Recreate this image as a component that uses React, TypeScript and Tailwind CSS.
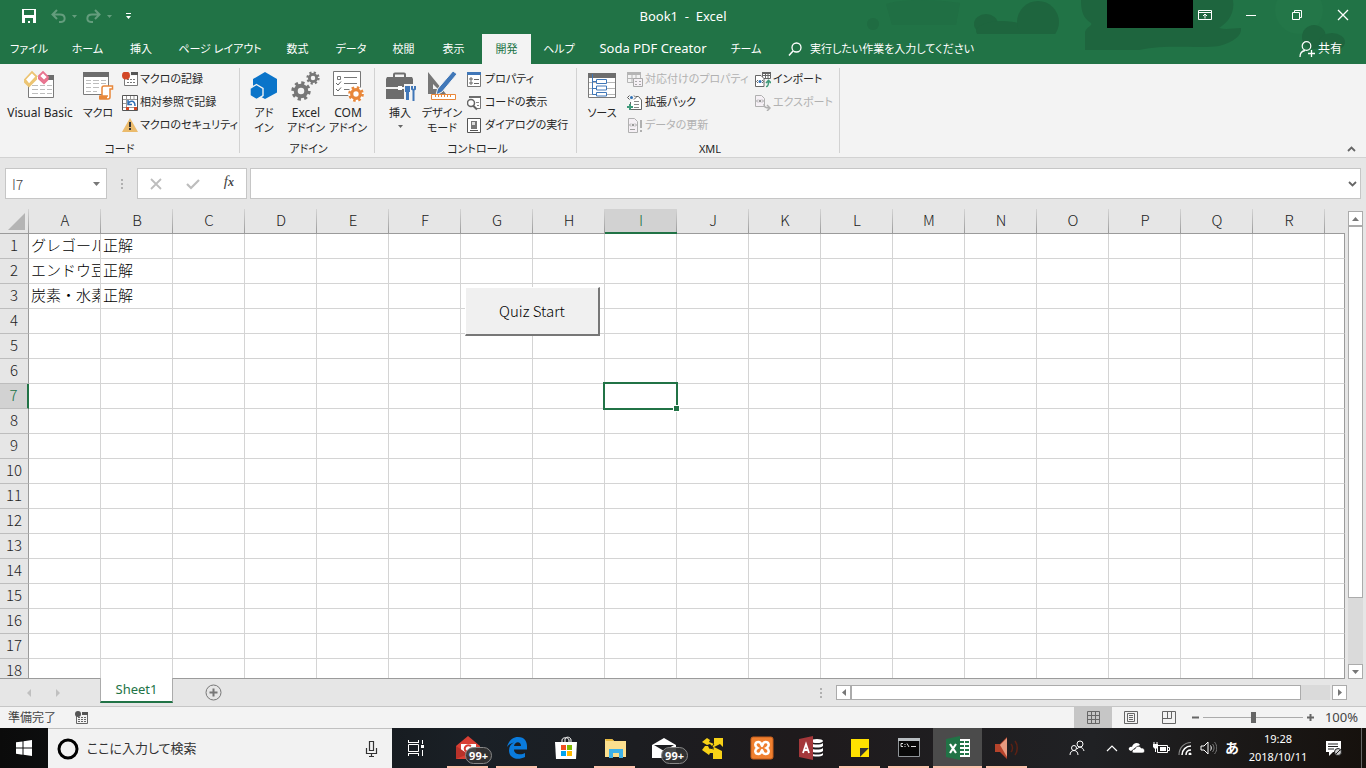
import type { ReactNode } from "react";
import clsx from "clsx";

const UI_FONT = "font-['Noto_Sans','Noto_Sans_CJK_JP',sans-serif] [font-feature-settings:'palt']";
const SHEET_FONT = "font-['Noto_Sans_CJK_JP',sans-serif] font-light [font-feature-settings:normal]";

const TABS = [
  { label: "ファイル", width: "w-[58px]" },
  { label: "ホーム", width: "w-[59px]" },
  { label: "挿入", width: "w-[48px]" },
  { label: "ページ レイアウト", width: "w-[110px]" },
  { label: "数式", width: "w-[45px]" },
  { label: "データ", width: "w-[62px]" },
  { label: "校閲", width: "w-[43px]" },
  { label: "表示", width: "w-[57px]" },
  { label: "開発", width: "w-[49px]", active: true },
  { label: "ヘルプ", width: "w-[56px]" },
  { label: "Soda PDF Creator", width: "w-[132px]", latin: true },
  { label: "チーム", width: "w-[54px]" },
];

const COLUMNS = "ABCDEFGHIJKLMNOPQR".split("");
const ROWS = Array.from({ length: 18 }, (_, i) => i + 1);
const CELLS: Record<string, string> = {
  A1: "グレゴール",
  B1: "正解",
  A2: "エンドウ豆",
  B2: "正解",
  A3: "炭素・水素",
  B3: "正解",
};

/* ---------- icons ---------- */

function Icon({ w = 16, h = 16, children, className }: { w?: number; h?: number; children: ReactNode; className?: string }) {
  return (
    <svg width={w} height={h} viewBox={`0 0 ${w} ${h}`} fill="none" className={clsx("shrink-0", className)} aria-hidden="true">
      {children}
    </svg>
  );
}

function Gear({ x, y, r, color }: { x: number; y: number; r: number; color: string }) {
  const tooth = (2 * Math.PI * r) / 16;
  return (
    <g stroke={color}>
      <circle cx={x} cy={y} r={r * 0.66} strokeWidth={r * 0.5} />
      <circle cx={x} cy={y} r={r} strokeWidth={r * 0.42} strokeDasharray={`${tooth} ${tooth}`} />
    </g>
  );
}

const VisualBasicIcon = () => (
  <Icon w={32} h={32}>
    <path d="M4.500 8v19.500h25V5" fill="#fff" stroke="#7a7a7a" />
    <path d="M23 5h7v5h-7z" fill="#6d6d6d" />
    <path d="M8 15.500h6m2 0h5m2 0h5M8 19.500h6m2 0h5m2 0h5M8 23.500h6m2 0h5m2 0h5" stroke="#bdbdbd" />
    <path d="M1 9.500 8 2l4.500 4.500L5 14.500z" fill="#fff" stroke="#ecc472" strokeWidth="1.800" />
    <path d="M0 9.500 5 14.500v3L0 12.500zM5 14.500l8-8v3l-8 8z" fill="#ecc472" />
    <path d="m15 6 4-4 5 5-4 4z" fill="#fff" stroke="#e8738f" strokeWidth="1.800" />
    <path d="m14 6 6 5.500v3L14 9zM20 11.500l4.500-4.500v3L20 14.500z" fill="#e8738f" />
  </Icon>
);

const MacroIcon = () => (
  <Icon w={32} h={32}>
    <path d="M1.500 4v20.500h25V4" fill="#fff" stroke="#7a7a7a" />
    <path d="M1 2h26v5H1z" fill="#6d6d6d" />
    <path d="M4 10.500h5m2 0h6m2 0h5M4 13.500h5m2 0h6m2 0h5M4 17.500h5m2 0h6M4 21.500h5m2 0h4" stroke="#bdbdbd" />
    <path d="M20 27V18c0-1.500 1-2 2-2h8.500v3H28v8c0 1.500-1 2-2 2h-8v-3h8" fill="#fff" stroke="#e8873a" strokeWidth="1.500" />
    <path d="M17 26h8v3h-8z" fill="#e8873a" />
  </Icon>
);

const AddinIcon = () => (
  <Icon w={32} h={32}>
    <path d="m17 2 12 7v13.500l-12 6.500-12-6.500V9z" fill="#0a74c9" />
    <path d="m8.500 14.500 6.500 3.800v7.400l-6.500 3.800L2 25.700v-7.400z" fill="#0a74c9" stroke="#f3f3f3" strokeWidth="1.400" />
  </Icon>
);

const ExcelAddinIcon = () => (
  <Icon w={32} h={32}>
    <Gear x={11} y={21} r={8} color="#777" />
    <Gear x={23} y={8} r={5.500} color="#777" />
  </Icon>
);

const ComAddinIcon = () => (
  <Icon w={32} h={32}>
    <path d="M1.500 1.500h27v24h-27z" fill="#fff" stroke="#777" />
    <path d="M5.500 6.500h3v3h-3z" stroke="#777" />
    <path d="M12 7.500h13M12 13.500h13M12 19.500h7" stroke="#777" />
    <path d="m4 13 2 2 3-3.500M4 19l2 2 3-3.500" stroke="#666" />
    <circle cx="24" cy="24" r="8" fill="#fff" />
    <Gear x={24} y={24} r={6.500} color="#e8873a" />
  </Icon>
);

const ToolboxIcon = () => (
  <Icon w={32} h={32}>
    <path d="M10 7V4.500C10 4 10.500 3.500 11 3.500h9c.5 0 1 .5 1 1V7" stroke="#6d6d6d" strokeWidth="2" />
    <path d="M3 7h25l1 2v8H2V9zM2 19h27v10H2z" fill="#6d6d6d" />
    <path d="M14 16h4v4h-4z" fill="#fff" />
    <path d="M20 14h11v17H20z" fill="#f3f3f3" />
    <path d="M21 16h5v6h-1v8h-3v-8h-1z" fill="#4077b8" />
    <path d="M28 16v3l1.500 1 1.500-1v-3m-1.500 4v11" stroke="#4077b8" strokeWidth="2" />
  </Icon>
);

const DesignIcon = () => (
  <Icon w={32} h={32}>
    <path d="M2 2 20 24H2zm5 12v5h5z" fill="#777" fillRule="evenodd" />
    <path d="M27 1 31 4 16 22l-6 3 1.500-6z" fill="#4077b8" stroke="#f3f3f3" />
    <path d="M5.500 24.500h24v5h-24z" fill="#fff" stroke="#e8873a" />
    <path d="M9.500 25v2m3-2v2m3-2v2m3-2v2m3-2v2m3-2v2" stroke="#e8873a" />
  </Icon>
);

const SourceIcon = () => (
  <Icon w={32} h={32}>
    <path d="M2.500 4v23.500h27V4" fill="#fff" stroke="#7a7a7a" />
    <path d="M2 3h28v5H2z" fill="#6d6d6d" />
    <path d="M3 12.500h26M3 18.500h26M3 24.500h26" stroke="#b5b5b5" />
    <path d="M6.500 4v20.500h5M6.500 11.500h4m-4 7h4" stroke="#4077b8" />
    <path d="M10.500 9.500h10v4h-10zm0 6.500h10v4h-10zm0 6.500h10v3.500h-10z" fill="#fff" stroke="#4077b8" />
  </Icon>
);

const RecordIcon = () => (
  <Icon>
    <path d="M2.500 5v8.500h13V3" fill="#fff" stroke="#7a7a7a" />
    <path d="M9 0h7v3H9z" fill="#555" />
    <path d="M5 7.500h2m1 0h2m1 0h2M5 10.500h2m1 0h2m1 0h2" stroke="#777" />
    <circle cx="4" cy="3.500" r="4" fill="#d24726" />
  </Icon>
);

const RelativeIcon = () => (
  <Icon>
    <path d="M.5.500h15v15H.5z" fill="#fff" stroke="#555" />
    <path d="M4.500 1v14M8.500 1v3m3.500-3v3M1 4.500h14M1 8.500h3m-3 4h14" stroke="#999" />
    <path d="M5 5h10v7H5z" fill="#fff" />
    <path d="M6 9c2-4 7-4 7 2M6 5v4.500h4" stroke="#2f6fb5" strokeWidth="1.500" />
    <path d="M4 12h3v3H4zm8 0h3v3h-3z" fill="#d24726" />
  </Icon>
);

const WarningIcon = () => (
  <Icon>
    <path d="M8 0 16 14H0z" fill="#ebbb6c" />
    <path d="M7 4h2v5H7zm0 6h2v2H7z" fill="#333" />
  </Icon>
);

const PropertyIcon = () => (
  <Icon>
    <path d="M.5.500h13v14H.5z" fill="#fff" stroke="#777" />
    <path d="M0 0h14v3H0z" fill="#4077b8" />
    <path d="M3 6h2v2H3zm0 4h2v2H3zM7 7.500h5M7 11.500h5" stroke="#666" />
  </Icon>
);

const ViewCodeIcon = () => (
  <Icon>
    <path d="M2.500 1.500h11v12h-5" fill="#fff" stroke="#777" />
    <path d="M2 1h12v2H2z" fill="#6d6d6d" />
    <path d="M9 7.500h3m-2 3h2" stroke="#888" />
    <circle cx="4" cy="8" r="3.500" fill="#fff" stroke="#666" strokeWidth="1.500" />
    <path d="m6 10.500 4 4" stroke="#666" strokeWidth="2" />
  </Icon>
);

const DialogIcon = () => (
  <Icon>
    <path d="M.5.500h13v14H.5z" fill="#fff" stroke="#555" />
    <path d="M4 3h6v8H4z" fill="#777" />
    <path d="M3 12.500h8" stroke="#555" />
    <path d="M5 4h3v3H5z" fill="#ddd" />
  </Icon>
);

const MapPropsIcon = () => (
  <Icon>
    <path d="M.5.500h13v10H.5zM5 3v7m4-7v3M1 6.500h6" fill="#f3f3f3" stroke="#b5b5b5" />
    <path d="M0 0h14v3H0z" fill="#b5b5b5" />
    <path d="M6.500 6.500h9v8h-9z" fill="#f5f0f5" stroke="#a9a9a9" />
    <path d="M8 9.500h2m2 0h2m-6 3h2m2 0h2" stroke="#a9a9a9" />
  </Icon>
);

const ExpansionIcon = () => (
  <Icon>
    <path d="M3.500 7v7.500h11V5l-3-3.500H9" fill="#fff" stroke="#666" />
    <path d="M7 6.500h5m-5 3h5m-5 3h5" stroke="#888" />
    <path d="M2.500.500.500 2.500l2 2M7 .5l2 2-2 2" stroke="#555" />
    <circle cx="4.500" cy="2.500" r="1.500" fill="#2f6fb5" />
    <path d="M3 9v6M0 12h6" stroke="#3f9a7a" strokeWidth="2" />
  </Icon>
);

const RefreshDataIcon = () => (
  <Icon>
    <path d="M1.500.500h6l3 3v11h-9z" fill="#f5f0f5" stroke="#b0b0b0" />
    <path d="M4 5.500 2.500 7 4 8.500m4-3L9.500 7 8 8.500M3 11.500h5" stroke="#a0a0a0" />
    <circle cx="6" cy="7" r="1.300" fill="#999" />
    <path d="M13 2h2v8h-2zm0 10h2v2h-2z" fill="#b0b0b0" />
  </Icon>
);

const ImportIcon = () => (
  <Icon>
    <path d="M7.500.500h8v6h-8zM8 3.500h7M10.500 1v5M13 1v5" fill="#fff" stroke="#666" />
    <path d="M7 0h9v2H7z" fill="#666" />
    <path d="M.5 3.500H6l3 3v8H.5z" fill="#fff" stroke="#666" />
    <path d="M3 8 1.500 9.500 3 11m4-3 1.500 1.500L7 11" stroke="#666" />
    <circle cx="5" cy="9.500" r="1.500" fill="#2f6fb5" />
    <path d="M11 14.500c2 0 2.500-1 2.500-5M11 11l2.500-2.500L16 11" stroke="#3f9a7a" strokeWidth="1.600" />
  </Icon>
);

const ExportIcon = () => (
  <Icon>
    <path d="M.5.500h6l3 3v8H.5z" fill="#f5f0f5" stroke="#b0b0b0" />
    <path d="M3 4.500 1.500 6 3 7.500m4-3L8.500 6 7 7.500" stroke="#a0a0a0" />
    <circle cx="5" cy="6" r="1.300" fill="#999" />
    <path d="M9 9c0 3 1 4 6 4m-3-3 3 3-3 3" stroke="#b0b0b0" strokeWidth="1.500" />
  </Icon>
);

/* ---------- title bar and tabs ---------- */

function TitleArt() {
  return (
    <svg width="500" height="52" viewBox="0 0 500 52" className="pointer-events-none absolute top-0 right-0" aria-hidden="true">
      <path d="M20 4c20-6 50-4 74-1l-4 22H26z" fill="#1f6c42" opacity=".6" />
      <g fill="#1e653e">
        <circle cx="7" cy="24" r="6" opacity=".5" />
        <ellipse cx="120" cy="24" rx="12" ry="10" />
        <ellipse cx="136" cy="31" rx="26" ry="10" />
        <circle cx="172" cy="22" r="21" />
        <path d="M215 0h152c2 12-4 22-14 28 8 2 14 0 22 0 1 8-8 14-22 18-20 3-50-2-80 4h-54V32c2-6 8-6 6-9-8-5-10-12-10-23z" />
      </g>
      <circle cx="433" cy="10" r="24" fill="#237648" />
      <path d="M0 34h219v18H0z" fill="#217346" />
      <circle cx="448" cy="37" r="12" fill="#1e653e" />
      <ellipse cx="466" cy="42" rx="13" ry="9" fill="#1e653e" />
    </svg>
  );
}

function CaptionButton({ label, children }: { label: string; children: ReactNode }) {
  return (
    <button aria-label={label} className="flex h-[30px] w-[46px] items-center justify-center">
      <Icon w={14} h={14}>{children}</Icon>
    </button>
  );
}

function TitleBar() {
  return (
    <header className="relative bg-[#217346] text-white">
      <TitleArt />
      <div className="relative flex h-[34px] items-start justify-between">
        <div className="flex h-8 flex-1 items-center text-white/30">
          <button aria-label="上書き保存" className="ml-[22px]">
            <Icon w={14} h={14}>
              <path d="M0 0h14v14H0zm2 1v5h10V1zm1 8v5h3v-2h2v2h3V9z" fill="#fff" fillRule="evenodd" />
            </Icon>
          </button>
          <button aria-label="元に戻す" className="ml-[15px] flex items-center gap-[6px]">
            <Icon w={15} h={14}>
              <path d="M6 1 1.500 5.500 6 10M2 5.500h7c6 0 6 7 1 7.500H8" stroke="currentColor" strokeWidth="2" />
            </Icon>
            <Icon w={5} h={3}><path d="M0 0h5L2.500 3z" fill="currentColor" /></Icon>
          </button>
          <button aria-label="やり直し" className="ml-[9px] flex items-center gap-[6px]">
            <Icon w={15} h={14}>
              <path d="M9 1l4.500 4.500L9 10m4-4.500H6c-6 0-6 7-1 7.500h2" stroke="currentColor" strokeWidth="2" />
            </Icon>
            <Icon w={5} h={3}><path d="M0 0h5L2.500 3z" fill="currentColor" /></Icon>
          </button>
          <button aria-label="クイック アクセス ツール バーのユーザー設定" className="ml-[14px]">
            <Icon w={5} h={7}><path d="M0 0h5v1H0zM0 3h5L2.500 6z" fill="#fff" /></Icon>
          </button>
        </div>
        <h1 className="text-[13px] leading-8 font-normal whitespace-pre">Book1  -  Excel</h1>
        <div className="flex flex-1 justify-end">
          <div className="h-7 w-[86px] bg-black" />
          <div className="-ml-[11px] flex">
            <CaptionButton label="リボンの表示オプション">
              <path d="M.5 2.500h13v9H.5zM1 4.500h12M7 10.500v-4M5 8l2-2 2 2" stroke="#fff" />
            </CaptionButton>
            <CaptionButton label="最小化"><path d="M2 7.500h10" stroke="#fff" /></CaptionButton>
            <CaptionButton label="元に戻す (縮小)">
              <path d="M2.500 4.500h7v7h-7zm2-.5V2.500h7v7H10" stroke="#fff" />
            </CaptionButton>
            <CaptionButton label="閉じる"><path d="m2 2 10 10m0-10L2 12" stroke="#fff" strokeWidth="1.300" /></CaptionButton>
          </div>
        </div>
      </div>
      <nav className="relative flex h-[30px] items-center text-[11px]">
        {TABS.map((tab) => (
          <button
            key={tab.label}
            className={clsx(
              "h-full whitespace-nowrap",
              tab.width,
              tab.latin && "text-[13px]",
              tab.active && "bg-[#f3f3f3] text-[#217346]",
            )}
          >
            {tab.label}
          </button>
        ))}
        <label className="ml-[15px] flex flex-1 items-center gap-2">
          <Icon w={14} h={14}>
            <circle cx="8.500" cy="5.500" r="4.500" stroke="#fff" strokeWidth="1.300" />
            <path d="m5 9-4 4.500" stroke="#fff" strokeWidth="1.500" />
          </Icon>
          <input
            aria-label="操作アシスト"
            placeholder="実行したい作業を入力してください"
            className="w-56 bg-transparent outline-none placeholder:text-white"
          />
        </label>
        <button className="mr-6 flex items-center gap-[3px] text-xs">
          <Icon>
            <circle cx="7.500" cy="5" r="4.300" stroke="#fff" strokeWidth="1.200" />
            <path d="M1 16c0-4 2-6 5-6.500M12.500 9v7M9 12.500h7" stroke="#fff" strokeWidth="1.300" />
          </Icon>
          共有
        </button>
      </nav>
    </header>
  );
}

/* ---------- ribbon ---------- */

function Group({ label, width, children }: { label: string; width: string; children: ReactNode }) {
  return (
    <section className={clsx("mt-1 flex h-[85px] flex-col border-r border-[#d2d2d2]", width)}>
      <div className="flex h-[73px] shrink-0 items-start">{children}</div>
      <p className="text-center text-[11px] leading-4">{label}</p>
    </section>
  );
}

function BigButton({ icon, lines, width, menu, latin }: { icon: ReactNode; lines: string[]; width: string; menu?: boolean; latin?: boolean }) {
  return (
    <button className={clsx("flex shrink-0 flex-col items-center pt-[2px] leading-[15px] whitespace-nowrap", width, latin ? "text-xs" : "text-[11px]")}>
      {icon}
      <span className="mt-[3px]">{lines[0]}</span>
      {lines[1] && <span className="text-[11px]">{lines[1]}</span>}
      {menu && <Icon w={5} h={3} className="mt-[5px]"><path d="M0 0h5L2.500 3z" fill="#666" /></Icon>}
    </button>
  );
}

function SmallButton({ icon, label, disabled }: { icon: ReactNode; label: string; disabled?: boolean }) {
  return (
    <button disabled={disabled} className={clsx("flex h-[23px] items-center gap-[2px] text-[11px] whitespace-nowrap", disabled && "text-[#b1b1b1]")}>
      {icon}
      {label}
    </button>
  );
}

function Ribbon() {
  return (
    <div className="relative flex h-[94px] border-b border-[#d2d2d2] bg-[#f3f3f3] text-[#262626]">
      <Group label="コード" width="w-[240px]">
        <BigButton icon={<VisualBasicIcon />} lines={["Visual Basic"]} width="w-[80px]" latin />
        <BigButton icon={<MacroIcon />} lines={["マクロ"]} width="w-9" />
        <div className="ml-[6px]">
          <SmallButton icon={<RecordIcon />} label="マクロの記録" />
          <SmallButton icon={<RelativeIcon />} label="相対参照で記録" />
          <SmallButton icon={<WarningIcon />} label="マクロのセキュリティ" />
        </div>
      </Group>
      <Group label="アドイン" width="w-[135px] pl-[3px]">
        <BigButton icon={<AddinIcon />} lines={["アド", "イン"]} width="w-[42px]" />
        <BigButton icon={<ExcelAddinIcon />} lines={["Excel", "アドイン"]} width="w-[42px]" latin />
        <BigButton icon={<ComAddinIcon />} lines={["COM", "アドイン"]} width="w-[42px]" latin />
      </Group>
      <Group label="コントロール" width="w-[202px] pl-1">
        <BigButton icon={<ToolboxIcon />} lines={["挿入"]} width="w-[42px]" menu />
        <BigButton icon={<DesignIcon />} lines={["デザイン", "モード"]} width="w-[42px]" />
        <div className="ml-1">
          <SmallButton icon={<PropertyIcon />} label="プロパティ" />
          <SmallButton icon={<ViewCodeIcon />} label="コードの表示" />
          <SmallButton icon={<DialogIcon />} label="ダイアログの実行" />
        </div>
      </Group>
      <Group label="XML" width="w-[263px] pl-1">
        <BigButton icon={<SourceIcon />} lines={["ソース"]} width="w-[42px]" />
        <div className="ml-1 w-[128px]">
          <SmallButton icon={<MapPropsIcon />} label="対応付けのプロパティ" disabled />
          <SmallButton icon={<ExpansionIcon />} label="拡張パック" />
          <SmallButton icon={<RefreshDataIcon />} label="データの更新" disabled />
        </div>
        <div>
          <SmallButton icon={<ImportIcon />} label="インポート" />
          <SmallButton icon={<ExportIcon />} label="エクスポート" disabled />
        </div>
      </Group>
      <button aria-label="リボンを折りたたむ" className="mt-auto mr-[10px] mb-1 ml-auto">
        <Icon w={9} h={8}><path d="m1 6 3.500-3.500L8 6" stroke="#666" strokeWidth="1.800" /></Icon>
      </button>
    </div>
  );
}

/* ---------- formula bar ---------- */

function FormulaBar() {
  return (
    <div className="flex h-[51px] items-center pr-[5px] pl-[5px]">
      <label className="flex h-[31px] w-[102px] items-center border border-[#c6c6c6] bg-white pr-[6px] pl-[6px]">
        <input aria-label="名前ボックス" defaultValue="I7" className={clsx("w-full min-w-0 bg-transparent text-sm text-[#444] outline-none", SHEET_FONT)} />
        <Icon w={7} h={4}><path d="M0 0h7L3.500 4z" fill="#777" /></Icon>
      </label>
      <Icon w={30} h={12}><path d="M14 1h2v2h-2zm0 4h2v2h-2zm0 4h2v2h-2z" fill="#b0b0b0" /></Icon>
      <div className="flex h-[31px] w-[110px] items-center justify-around border border-[#c6c6c6] bg-white">
        <button aria-label="キャンセル">
          <Icon w={12} h={12}><path d="m1 1 10 10m0-10L1 11" stroke="#bdbdbd" strokeWidth="1.800" /></Icon>
        </button>
        <button aria-label="入力">
          <Icon w={14} h={12}><path d="m1 6 4 4 8-8" stroke="#bdbdbd" strokeWidth="2.200" /></Icon>
        </button>
        <button className="pb-1 font-['Liberation_Serif',serif] text-[15px] leading-none text-[#444] italic">
          f<span className="text-xs font-bold">x</span>
        </button>
      </div>
      <label className="ml-[3px] flex h-[31px] flex-1 items-center border border-[#c6c6c6] bg-white pr-[3px]">
        <input aria-label="数式バー" className="flex-1 bg-transparent px-2 text-sm outline-none" />
        <Icon w={9} h={8}><path d="m1 2 3.500 3.500L8 2" stroke="#666" strokeWidth="1.800" /></Icon>
      </label>
    </div>
  );
}

/* ---------- sheet ---------- */

function Sheet() {
  return (
    <div className={clsx("relative min-w-0 flex-1 overflow-hidden border-b border-[#9b9b9b] text-[15px]", SHEET_FONT)}>
      <table className="w-full table-fixed border-separate border-spacing-0">
        <colgroup>
          <col className="w-[29px]" />
          {COLUMNS.map((c) => <col key={c} className="w-[72px]" />)}
          <col />
        </colgroup>
        <thead>
          <tr className="h-[25px] leading-[22px] text-[#222]">
            <th aria-label="すべて選択" className="border-b border-[#9b9b9b] bg-[linear-gradient(#d4d4d4,#9b9b9b)] bg-[length:1px_100%] bg-right bg-no-repeat p-0">
              <Icon w={17} h={17} className="ml-2"><path d="M17 0v17H0z" fill="#b4b4b4" /></Icon>
            </th>
            {COLUMNS.map((c) => (
              <th
                key={c}
                className={clsx(
                  "bg-[linear-gradient(#d4d4d4,#9b9b9b)] bg-[length:1px_100%] bg-right bg-no-repeat p-0 align-top font-light",
                  c === "I" ? "border-b-2 border-[#217346] bg-[#d2d2d2] text-[#217346]" : "border-b border-[#9b9b9b]",
                )}
              >
                {c}
              </th>
            ))}
            <th className="border-b border-[#9b9b9b] p-0" />
          </tr>
        </thead>
        <tbody>
          {ROWS.map((row) => (
            <tr key={row} className="h-[25px] leading-[22px]">
              <th
                className={clsx(
                  "border-r border-b border-b-[#bdbdbd] p-0 align-top font-light",
                  row === 7 ? "border-r-2 border-r-[#217346] bg-[#d2d2d2] text-[#217346]" : "border-r-[#9b9b9b] bg-[#e6e6e6] text-[#222]",
                )}
              >
                {row}
              </th>
              {COLUMNS.map((c) => (
                <td key={c} className="relative border-r border-b border-[#d4d4d4] bg-white p-0 align-top text-black">
                  {CELLS[c + row] && <div className="h-6 overflow-hidden pl-[2px] whitespace-nowrap">{CELLS[c + row]}</div>}
                  {c === "I" && row === 7 && (
                    <div className="absolute -inset-[2px] z-10 border-2 border-[#217346]">
                      <div className="absolute -right-1 -bottom-1 size-[7px] border border-white bg-[#217346]" />
                    </div>
                  )}
                </td>
              ))}
              <td className="border-r border-b border-r-[#9b9b9b] border-b-[#d4d4d4] bg-white p-0" />
            </tr>
          ))}
        </tbody>
      </table>
      <button className="absolute top-[78px] left-[465px] h-[49px] w-[135px] border-t border-r-2 border-b-2 border-l border-t-white border-r-[#777] border-b-[#777] border-l-white bg-[#f0f0f0] text-[15px]">
        Quiz Start
      </button>
    </div>
  );
}

function VerticalScroll() {
  return (
    <div className="flex w-[21px] flex-col items-center pt-[2px]">
      <button aria-label="上へスクロール" className="flex h-[15px] w-[15px] items-center justify-center border border-[#ababab] bg-white">
        <Icon w={7} h={4}><path d="M0 4h7L3.500 0z" fill="#777" /></Icon>
      </button>
      <div className="flex w-[15px] flex-1 flex-col bg-[#dadada]">
        <div className="h-[85%] border border-[#ababab] bg-white" />
      </div>
      <button aria-label="下へスクロール" className="flex h-[15px] w-[15px] items-center justify-center border border-[#ababab] bg-white">
        <Icon w={7} h={4}><path d="M0 0h7L3.500 4z" fill="#777" /></Icon>
      </button>
    </div>
  );
}

function SheetTabs() {
  return (
    <div className="flex h-[27px] items-center pr-[19px]">
      <div className="flex w-[100px] items-center gap-[25px] pl-[27px]">
        <button aria-label="前のシート"><Icon w={4} h={8}><path d="M4 0v8L0 4z" fill="#c0c0c0" /></Icon></button>
        <button aria-label="次のシート"><Icon w={4} h={8}><path d="M0 0v8l4-4z" fill="#c0c0c0" /></Icon></button>
      </div>
      <button className="relative -mt-px h-[25px] w-[73px] self-start border-x border-b-2 border-x-[#ababab] border-b-[#217346] bg-white text-[13px] text-[#217346]">
        Sheet1
      </button>
      <button aria-label="新しいシート" className="ml-8">
        <Icon w={17} h={17}>
          <circle cx="8.500" cy="8.500" r="7.500" stroke="#777" />
          <path d="M8.500 4.500v8m-4-4h8" stroke="#777" strokeWidth="2" />
        </Icon>
      </button>
      <div className="flex-1" />
      <Icon w={20} h={12}><path d="M4 1h2v2H4zm0 4h2v2H4zm0 4h2v2H4z" fill="#b0b0b0" /></Icon>
      <div className="flex h-[15px] w-[38%] max-w-[511px]">
        <button aria-label="左へスクロール" className="flex w-[15px] items-center justify-center border border-[#ababab] bg-white">
          <Icon w={4} h={7}><path d="M4 0v7L0 3.500z" fill="#777" /></Icon>
        </button>
        <div className="flex flex-1 bg-[#dadada]">
          <div className="w-[94%] border border-[#ababab] bg-white" />
        </div>
        <button aria-label="右へスクロール" className="ml-[2px] flex w-[15px] items-center justify-center border border-[#ababab] bg-white">
          <Icon w={4} h={7}><path d="M0 0v7l4-3.500z" fill="#777" /></Icon>
        </button>
      </div>
    </div>
  );
}

function StatusBar() {
  return (
    <div className="flex h-[22px] items-center border-t border-[#c6c6c6] bg-[#f3f3f3] pr-2 pl-2 text-xs text-[#444]">
      <span>準備完了</span>
      <button aria-label="マクロの記録" className="ml-[19px]">
        <Icon w={14} h={13}>
          <path d="M1.500 5v7.500h11V3" stroke="#666" />
          <path d="M7 1h6v3H7z" fill="#555" />
          <path d="M3 6.500h2m1 0h2m1 0h2m-8 2h2m1 0h2m1 0h2m-8 2h2m1 0h2m1 0h2" stroke="#666" />
          <circle cx="3" cy="3" r="3" fill="#555" />
        </Icon>
      </button>
      <div className="ml-auto flex h-full">
        <button aria-label="標準" className="flex w-[38px] items-center justify-center bg-[#c6c6c6]">
          <Icon w={13} h={13}><path d="M.5.500h12v12H.5zM4.500 1v11M8.500 1v11M1 4.500h11M1 8.500h11" stroke="#666" /></Icon>
        </button>
        <button aria-label="ページ レイアウト" className="flex w-[38px] items-center justify-center">
          <Icon w={14} h={13}><path d="M.5.500h13v12H.5zM3.500 2.500h7v8h-7zM5 4.500h4m-4 2h4m-4 2h4" stroke="#666" /></Icon>
        </button>
        <button aria-label="改ページ プレビュー" className="flex w-[38px] items-center justify-center">
          <Icon w={14} h={13}><path d="M.5.500h13v12H.5zM1 7.500h8.500V1M5.500 1v6" stroke="#666" /></Icon>
        </button>
      </div>
      <button aria-label="縮小" className="ml-1"><Icon w={7} h={7}><path d="M0 3.500h7" stroke="#666" strokeWidth="2" /></Icon></button>
      <input
        type="range"
        aria-label="ズーム"
        defaultValue={50}
        className="mx-1 h-3 w-[100px] appearance-none bg-[linear-gradient(#ababab,#ababab)] bg-[length:100%_1px] bg-center bg-no-repeat [&::-webkit-slider-thumb]:h-[11px] [&::-webkit-slider-thumb]:w-[5px] [&::-webkit-slider-thumb]:appearance-none [&::-webkit-slider-thumb]:bg-[#666]"
      />
      <button aria-label="拡大"><Icon w={7} h={7}><path d="M0 3.500h7M3.500 0v7" stroke="#666" strokeWidth="2" /></Icon></button>
      <span className="w-[44px] text-right text-[13px]">100%</span>
    </div>
  );
}

/* ---------- taskbar ---------- */

function Task({ label, open, active, badge, children }: { label: string; open?: boolean; active?: boolean; badge?: string; children: ReactNode }) {
  return (
    <button aria-label={label} className={clsx("relative flex h-full w-[49px] items-center justify-center", active && "bg-[#4b4b4b]")}>
      <Icon w={24} h={24}>{children}</Icon>
      {badge && (
        <span className="absolute right-0 bottom-1 rounded-full border border-[#888] bg-[#333]/90 px-[3px] text-[11px] leading-[15px] font-bold text-white">
          {badge}
        </span>
      )}
      {open && <span className={clsx("absolute bottom-0 h-[2px] bg-[#fcc3ad]", active ? "inset-x-0" : "inset-x-1")} />}
    </button>
  );
}

function Taskbar() {
  return (
    <footer className="flex h-10 items-center bg-[linear-gradient(90deg,#0b0b0b,#1a2026_35%,#1e1a1c_58%,#202124_80%,#16110d)] text-white">
      <button aria-label="スタート" className="flex w-12 justify-center">
        <Icon><path d="m0 2.300 6.500-.9v6.200H0zM7.500 1.200 16 0v7.600H7.500zM0 8.500h6.500v6.200L0 13.800zM7.500 8.500H16V16l-8.500-1.200z" fill="#fff" /></Icon>
      </button>
      <label className="flex h-full w-[344px] items-center border-t border-[#c0c0c0] bg-[#f2f2f2] pr-[14px] pl-[9px]">
        <Icon w={22} h={22}><circle cx="11" cy="11" r="9" stroke="#000" strokeWidth="3" /></Icon>
        <input
          aria-label="検索"
          placeholder="ここに入力して検索"
          className="ml-2 min-w-0 flex-1 bg-transparent text-[13px] outline-none placeholder:text-[#333]"
        />
        <Icon w={13} h={18}>
          <path d="M4.500 1.500h4v9h-4zM1.500 8v5.500h10V8M6.500 14v3M4 16.500h5" stroke="#333" strokeWidth="1.200" />
        </Icon>
      </label>
      <div className="mr-[2px] h-full">
        <Task label="タスク ビュー">
          <path d="M3.500 6V4m0 16v-2m10-12V4m0 16v-2M3.500 8.500h10v7h-10zM3 6.500h11m-11 11h11M17.500 4v4m0 6v6" stroke="#fff" />
          <path d="M16 9h3v3h-3z" fill="#fff" />
        </Task>
      </div>
      <Task label="Gmail" open badge="99+">
        <path d="m0 10 12-10 12 10v13H0z" fill="#d93f34" />
        <path d="M5 8h15v9l-8 3-7-5z" fill="#fff" />
        <path d="M15 10c-6-3-9 5-3 6" stroke="#d93f34" strokeWidth="2" />
        <path d="m0 10 12 8-12 5z" fill="#b8322a" />
      </Task>
      <Task label="Edge" open>
        <path d="M2 11C4 4 8 1 13 1c7 0 9 5 9 9v3.500H9c0 5 7 6 11 3.500V21C12 25 4 22 4 14.500c0-4 2-6.500 5-8C6 7 4 8.500 2 11zm7-1h7c0-5-6-5-7 0z" fill="#0a7bdc" />
      </Task>
      <Task label="Store">
        <path d="M8 6V4c0-3 7-3 7 0v2M11 6V3c1-3 6-2 6 1v2" stroke="#fff" />
        <path d="M1 6h22l-1 17H2z" fill="#fff" />
        <path d="M7 9h5v5H7z" fill="#f25022" />
        <path d="M13 9h5v5h-5z" fill="#7fba00" />
        <path d="M7 15h5v5H7z" fill="#00a4ef" />
        <path d="M13 15h5v5h-5z" fill="#ffb900" />
      </Task>
      <Task label="エクスプローラー" open>
        <path d="M2 3h7l2 2h12v16H2z" fill="#fbdf8e" />
        <path d="M2 3h7l2 2H3z" fill="#e8b93f" />
        <path d="M6 13h14v9h-4v-5h-6v5H6z" fill="#3db1e8" />
      </Task>
      <Task label="メール" badge="99+">
        <path d="M0 9 12 2l12 7v13H0z" fill="#fff" />
        <path d="m2 9 20 0-10 6z" fill="#1c1d20" />
      </Task>
      <Task label="VMware">
        <path d="m1 6 5-4 3 2-1 2 5 2V2h9v9l-3-3-6 3 8 4v8h-9v-6H9l-1 2-7-5 3-4h3l1 2h5l-4-4-3 1z" fill="#f7d117" />
        <path d="m8 12 5 1m0-5-3 4" stroke="#222" />
      </Task>
      <Task label="XAMPP">
        <rect x="1" y="1" width="22" height="22" rx="2" fill="#f08030" stroke="#c65f1c" />
        <path d="M8.500 6C5 6 4 10 7.500 12 4 14 5 18 8.500 18c3 0 3-4 3.500-4s.5 4 3.500 4c3.500 0 4.500-4 1-6 3.500-2 2.500-6-1-6-3 0-3 4-3.500 4s-.5-4-3.500-4z" stroke="#fff" strokeWidth="2.500" />
      </Task>
      <Task label="Access">
        <ellipse cx="18" cy="5" rx="6" ry="2" fill="#fff" />
        <path d="M12 7c2 2 10 2 12 0v3c-2 2-10 2-12 0zm0 5c2 2 10 2 12 0v3c-2 2-10 2-12 0zm0 5c2 2 10 2 12 0v2c-2 2-10 2-12 0z" fill="#fff" />
        <path d="m0 3 14-3v24L0 21z" fill="#a4373a" />
        <path d="m4 17 3-9 3 9m-5-3h4" stroke="#fff" strokeWidth="1.800" />
      </Task>
      <Task label="付箋" open>
        <path d="M3 3h18v9l-9 9H3z" fill="#ffe100" />
        <path d="M12 12h9l-9 9z" fill="#333" />
        <path d="M21 12v9h-9z" fill="#ffe100" />
      </Task>
      <Task label="コマンド プロンプト" open>
        <path d="M1.500 2.500h21v18h-21z" fill="#080808" stroke="#8f9498" />
        <path d="M1 2h22v3H1z" fill="#b9bec2" />
        <path d="M6 7.500H4v3h2M8 8v1m0 1v1m2-3.500 2 3.500m2-.5h5" stroke="#ddd" />
      </Task>
      <Task label="Excel" open active>
        <path d="M12 3h12v18H12z" fill="#fff" />
        <path d="M14 6h4m1 0h4m-9 4h4m1 0h4m-9 4h4m1 0h4m-9 4h4m1 0h4" stroke="#217346" strokeWidth="2" />
        <path d="m0 3 14-3v24L0 21z" fill="#217346" />
        <path d="m4 8 6 9m0-9-6 9" stroke="#fff" strokeWidth="2.200" />
      </Task>
      <Task label="サウンド" open>
        <path d="M0 8h5l7-7v22l-7-7H0z" fill="#b5432b" />
        <path d="M5 9l7-7v19z" fill="#e59a80" />
        <path d="M16 8c2 2 2 6 0 8m4-11c3 4 3 10 0 14" stroke="#5c2114" strokeWidth="1.500" />
      </Task>
      <div className="ml-auto flex h-full items-center">
        <button aria-label="People">
          <Icon w={16} h={16}>
            <circle cx="11" cy="4" r="3" stroke="#fff" />
            <circle cx="5" cy="8" r="2.500" stroke="#fff" />
            <path d="M1 15c0-6 8-6 8 0m-1-6c2-3 6-2 7 2" stroke="#fff" />
          </Icon>
        </button>
        <button aria-label="隠れているインジケーター" className="ml-[21px]">
          <Icon w={12} h={12}><path d="m1 9 5-5 5 5" stroke="#fff" strokeWidth="1.200" /></Icon>
        </button>
        <Icon w={17} h={12} className="ml-[10px]">
          <path d="M3 9c-4-1-2-5 1-4 1-5 7-5 8-2L7 6z" fill="#fff" />
          <path d="M6 11c-3 0-2-4 1-4 1-4 6-3 6-1 4-1 5 5 1 5z" fill="#fff" stroke="#1c1b1b" strokeWidth=".6" />
        </Icon>
        <Icon w={17} h={14} className="ml-2">
          <path d="M4.500 4.500h10v7h-10zM14.500 6.500h2v3h-2" stroke="#fff" />
          <path d="M7 6h6v4H7zM0 3h5v3L3 8H2L0 6z" fill="#fff" />
          <path d="M1 1v2m3-2v2M2.500 7v4" stroke="#fff" />
        </Icon>
        <Icon w={14} h={14} className="ml-2">
          <path d="M4 14C4 9 8 5 13 5M8 14c0-3 2-5 5-5" stroke="#fff" strokeWidth="1.500" />
          <path d="M1 14C1 7 6 1.500 13 1.500" stroke="#888" strokeWidth="1.200" />
          <circle cx="12" cy="13" r="1.500" fill="#fff" />
        </Icon>
        <Icon w={17} h={14} className="ml-2">
          <path d="M1 5h3l4-4v12L4 9H1z" stroke="#fff" />
          <path d="M10.500 4.500c1 1.500 1 3.500 0 5" stroke="#fff" />
          <path d="M12.500 3c2 2.500 2 5.500 0 8m2-10c3 3.500 3 8.500 0 12" stroke="#777" />
        </Icon>
        <button aria-label="入力モード" className="w-[30px] text-sm font-bold">あ</button>
        <div className="w-[62px] text-center text-[11px] leading-[18px] whitespace-nowrap">
          <p>19:28</p>
          <p>2018/10/11</p>
        </div>
        <button aria-label="アクション センター" className="ml-4">
          <Icon w={17} h={16}>
            <path d="M1 1h15v11H8l-4 4v-4H1z" fill="#fff" />
            <path d="M3 4h10M3 6.500h10M3 9h6" stroke="#222" />
            <circle cx="13" cy="12" r="3.500" fill="#ccc" stroke="#222" />
            <path d="m11 14 4-4" stroke="#222" />
          </Icon>
        </button>
        <div className="mr-1 ml-[19px] h-full border-l border-[#666]" />
      </div>
    </footer>
  );
}

export default function App() {
  return (
    <div className={clsx("flex h-screen flex-col overflow-hidden bg-[#e6e6e6]", UI_FONT)}>
      <TitleBar />
      <Ribbon />
      <FormulaBar />
      <main className="flex min-h-0 flex-1">
        <Sheet />
        <VerticalScroll />
      </main>
      <SheetTabs />
      <StatusBar />
      <Taskbar />
    </div>
  );
}
